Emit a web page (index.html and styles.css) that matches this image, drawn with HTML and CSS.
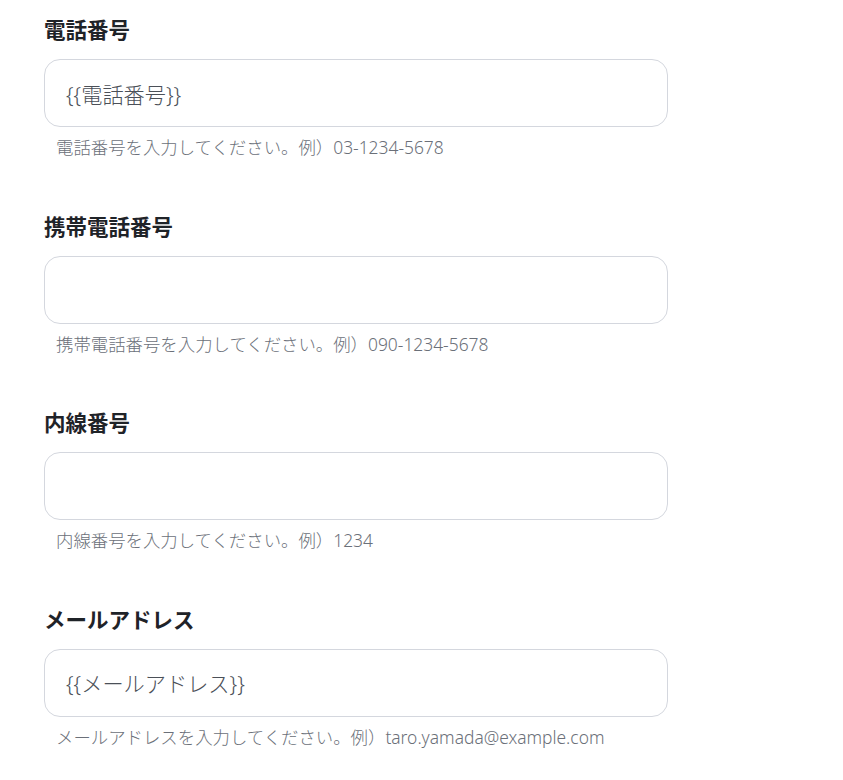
FILE: index.html
```html
<!DOCTYPE html>
<html lang="ja">
<head>
<meta charset="utf-8">
<link rel="stylesheet" href="styles.css">
</head>
<body>
<form class="form">
  <div class="field">
    <label class="label">電話番号</label>
    <div class="input">{{電話番号}}</div>
    <p class="help">電話番号を入力してください。例）03-1234-5678</p>
  </div>
  <div class="field">
    <label class="label">携帯電話番号</label>
    <div class="input"></div>
    <p class="help">携帯電話番号を入力してください。例）090-1234-5678</p>
  </div>
  <div class="field">
    <label class="label">内線番号</label>
    <div class="input"></div>
    <p class="help">内線番号を入力してください。例）1234</p>
  </div>
  <div class="field">
    <label class="label">メールアドレス</label>
    <div class="input">{{メールアドレス}}</div>
    <p class="help">メールアドレスを入力してください。例）taro.yamada@example.com</p>
  </div>
</form>
</body>
</html>
```
FILE: styles.css
```css
html, body {
  margin: 0;
  background: #ffffff;
}
body {
  font-family: "Noto Sans", "Noto Sans CJK JP", sans-serif;
}
.form {
  display: flex;
  flex-direction: column;
  gap: 53.67px;
  padding: 16px 0 0 44px;
  width: 624px;
}
.field {
  display: flex;
  flex-direction: column;
}
.label {
  font-size: 21.5px;
  line-height: 28px;
  font-weight: 700;
  color: #1f2328;
  margin-bottom: 15px;
}
.input {
  box-sizing: border-box;
  height: 68px;
  border: 1px solid #d4d7de;
  border-radius: 16px;
  padding: 0 21px;
  display: flex;
  align-items: center;
  font-size: 21.2px;
  font-weight: 300;
  color: #4b5058;
}
.help {
  margin: 8px 0 0 12px;
  font-size: 17.4px;
  line-height: 24px;
  font-weight: 300;
  color: #6b7079;
}
```
